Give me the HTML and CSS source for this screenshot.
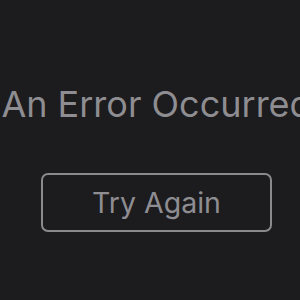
FILE: index.html
```html
<!DOCTYPE html>
<html>
<head>
  <link rel="stylesheet" href="styles.css">
</head>
<body>
  <div class="content">
    <h2 class="title">An Error Occurred</h2>
    <button class="button" type="button">Try Again</button>
  </div>
</body>
</html>
```

FILE: styles.css
```css
html, body {
  margin: 0;
  height: 100%;
  background-color: #1c1b1d;
  overflow: hidden;
}
.content {
  display: flex;
  flex-direction: column;
  align-items: center;
  padding-top: 83px;
  padding-left: 13px;
}
.title {
  margin: 0;
  color: #8e8d92;
  font-family: "Inter", "Liberation Sans", sans-serif;
  font-weight: 400;
  font-size: 36px;
  line-height: 42px;
  white-space: nowrap;
}
.button {
  margin-top: 48px;
  width: 231px;
  height: 59px;
  background-color: transparent;
  border: 2px solid #8a898e;
  border-radius: 7px;
  color: #8e8d92;
  font-family: "Inter", "Liberation Sans", sans-serif;
  font-size: 28.5px;
  padding: 0;
}
```
